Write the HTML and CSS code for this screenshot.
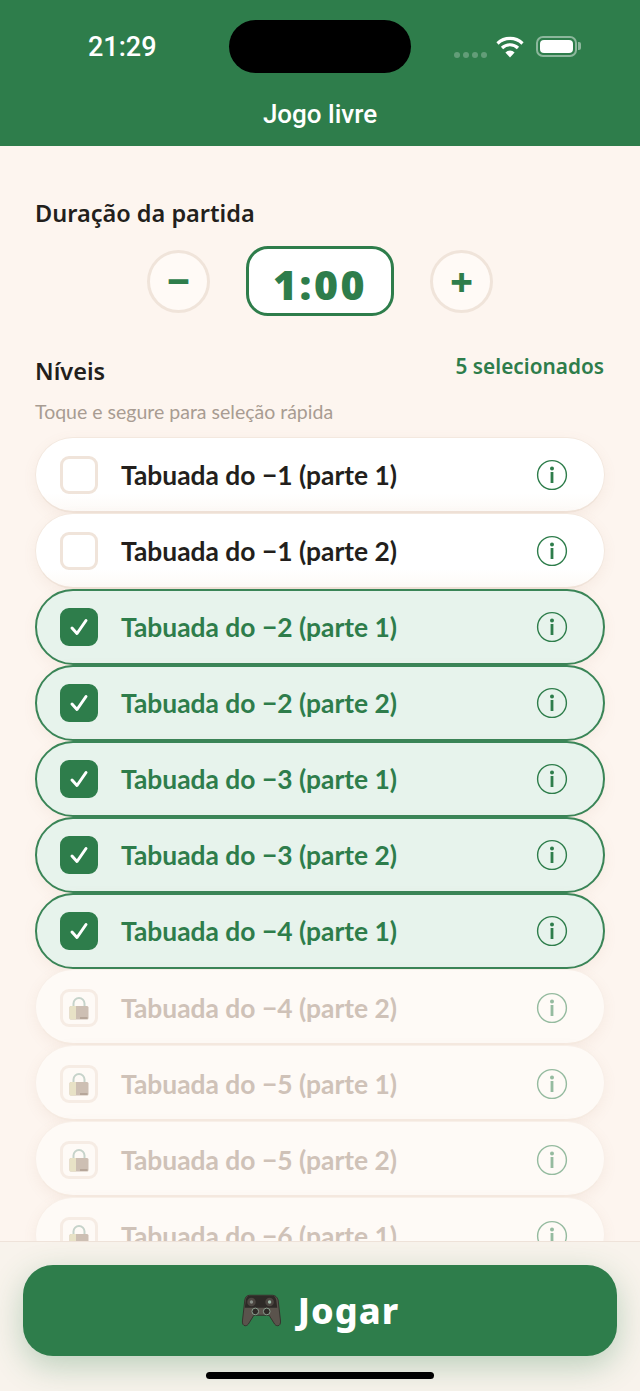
FILE: index.html
```html
<!DOCTYPE html>
<html lang="pt-BR">
<head>
  <meta charset="UTF-8">
  <title>Jogo livre</title>
  <link rel="stylesheet" href="styles.css">
</head>
<body>
  <svg class="sprites" width="0" height="0">
    <symbol id="info" viewBox="0 0 32 32">
      <circle cx="16" cy="16" r="14.4" fill="none" stroke="currentColor" stroke-width="1.4"/>
      <circle cx="16" cy="9.6" r="2" fill="currentColor"/>
      <rect x="14.6" y="13" width="2.8" height="11" fill="currentColor"/>
    </symbol>
    <symbol id="check" viewBox="0 0 20 20">
      <path d="M3 11l5 5.5L17 3.5" fill="none" stroke="#fff" stroke-width="3" stroke-linecap="round" stroke-linejoin="round"/>
    </symbol>
    <symbol id="lock" viewBox="0 0 20 24">
      <path d="M4.500 11V7.500a5.500 5.500 0 0 1 11 0V11" fill="none" stroke="#c6d3ca" stroke-width="2"/>
      <rect x="0.500" y="10" width="19" height="13.500" rx="1.500" fill="#cdbfb3"/>
      <path d="M2 10h5v13.500H2a1.500 1.500 0 0 1-1.500-1.500V11.500A1.500 1.500 0 0 1 2 10z" fill="#e8e2c6"/>
      <rect x="11" y="21.500" width="7.500" height="1" fill="#a08e80"/>
    </symbol>
  </svg>

  <div class="phone">
    <header class="topbar">
      <div class="status">
        <span class="clock">21:29</span>
        <div class="island"></div>
        <div class="status-icons">
          <div class="signal"><i></i><i></i><i></i><i></i></div>
          <svg class="wifi" width="28" height="22" viewBox="0 0 28 22">
            <path d="M1.500 7.500a18 18 0 0 1 25 0M6 12a11.500 11.500 0 0 1 16 0" fill="none" stroke="#fff" stroke-width="3.200"/>
            <path d="M14 21.500l-4.600-5a6.500 6.500 0 0 1 9.200 0z" fill="#fff"/>
          </svg>
          <div class="battery"><div class="battery-fill"></div></div>
          <div class="battery-cap"></div>
        </div>
      </div>
      <h1 class="title">Jogo livre</h1>
    </header>

    <main class="content">
      <h2 class="heading">Duração da partida</h2>
      <div class="stepper">
        <button class="step-btn">−</button>
        <div class="time-box">1:00</div>
        <button class="step-btn">+</button>
      </div>

      <div class="levels-head">
        <h2 class="heading">Níveis</h2>
        <span class="count">5 selecionados</span>
      </div>
      <p class="hint">Toque e segure para seleção rápida</p>

      <!-- Lista de níveis -->
      <ul class="levels">
        <li class="level"><span class="box"></span><span class="name">Tabuada do −1 (parte 1)</span><svg class="info"><use href="#info"/></svg></li>
        <li class="level"><span class="box"></span><span class="name">Tabuada do −1 (parte 2)</span><svg class="info"><use href="#info"/></svg></li>
        <li class="level selected"><span class="box"><svg class="tick"><use href="#check"/></svg></span><span class="name">Tabuada do −2 (parte 1)</span><svg class="info"><use href="#info"/></svg></li>
        <li class="level selected"><span class="box"><svg class="tick"><use href="#check"/></svg></span><span class="name">Tabuada do −2 (parte 2)</span><svg class="info"><use href="#info"/></svg></li>
        <li class="level selected"><span class="box"><svg class="tick"><use href="#check"/></svg></span><span class="name">Tabuada do −3 (parte 1)</span><svg class="info"><use href="#info"/></svg></li>
        <li class="level selected"><span class="box"><svg class="tick"><use href="#check"/></svg></span><span class="name">Tabuada do −3 (parte 2)</span><svg class="info"><use href="#info"/></svg></li>
        <li class="level selected"><span class="box"><svg class="tick"><use href="#check"/></svg></span><span class="name">Tabuada do −4 (parte 1)</span><svg class="info"><use href="#info"/></svg></li>
        <li class="level locked"><span class="box"><svg class="padlock"><use href="#lock"/></svg></span><span class="name">Tabuada do −4 (parte 2)</span><svg class="info"><use href="#info"/></svg></li>
        <li class="level locked"><span class="box"><svg class="padlock"><use href="#lock"/></svg></span><span class="name">Tabuada do −5 (parte 1)</span><svg class="info"><use href="#info"/></svg></li>
        <li class="level locked"><span class="box"><svg class="padlock"><use href="#lock"/></svg></span><span class="name">Tabuada do −5 (parte 2)</span><svg class="info"><use href="#info"/></svg></li>
        <li class="level locked"><span class="box"><svg class="padlock"><use href="#lock"/></svg></span><span class="name">Tabuada do −6 (parte 1)</span><svg class="info"><use href="#info"/></svg></li>
      </ul>
    </main>

    <footer class="bottom">
      <button class="play">
        <svg class="pad" width="40" height="35" viewBox="0 0 42 36">
          <path d="M9 2h24c3 0 5 2 6 5l2.500 22c.3 3-1 5-3 5-1.500 0-3-1-4-3l-5-8H13.500l-5 8c-1 2-2.500 3-4 3-2 0-3.300-2-3-5L4 7c.5-3 2-5 5-5z" fill="#5a534c" stroke="#35302c" stroke-width="1"/>
          <path d="M5 7c.5-3 2-4.500 4-4.500h24c2 0 3.500 1.500 4 4.500l1 8H4z" fill="#2e2a27"/>
          <circle cx="11" cy="9" r="4.500" fill="#4c4641"/>
          <circle cx="30" cy="9" r="4.500" fill="#4c4641"/>
          <circle cx="30" cy="9" r="1.800" fill="#9fb8a8"/>
          <circle cx="11" cy="9" r="1.800" fill="#8a8f88"/>
          <circle cx="15" cy="19" r="3.500" fill="#2e2a27" stroke="#8ea392" stroke-width="1"/>
          <circle cx="27" cy="19" r="3.500" fill="#2e2a27" stroke="#8ea392" stroke-width="1"/>
        </svg>
        <span>Jogar</span>
      </button>
      <div class="home-bar"></div>
    </footer>
  </div>
</body>
</html>
```

FILE: styles.css
```css
/* Reset minimal */
* { box-sizing: border-box; margin: 0; padding: 0; }

body {
  font-family: Lato, 'Noto Sans', sans-serif;
  background: #fdf5ef;
  color: #231f1c;
}

.sprites {
  display: block;
  height: 0;
}

.phone {
  position: relative;
  width: 640px;
  height: 1391px;
  display: flex;
  flex-direction: column;
  overflow: hidden;
}

/* Barre du haut */
.topbar {
  flex: none;
  height: 146px;
  background: #2e7d4b;
  color: #fff;
}
.status {
  position: relative;
  height: 96px;
  padding: 29px 59px 0 88px;
  display: flex;
  justify-content: space-between;
  align-items: flex-start;
}
.clock {
  font-family: Roboto, sans-serif;
  font-size: 27px;
  font-weight: 500;
  line-height: 36px;
}
.island {
  position: absolute;
  left: 229px;
  top: 20px;
  width: 182px;
  height: 53px;
  background: #000;
  border-radius: 27px;
}
.status-icons {
  display: flex;
  align-items: flex-start;
  padding-top: 7px;
}
.signal {
  display: flex;
  gap: 3px;
  margin: 16px 9px 0 0;
}
.signal i {
  width: 6px;
  height: 6px;
  border-radius: 50%;
  background: rgba(255,255,255,0.25);
}
.wifi {
  margin-right: 12px;
}
.battery {
  width: 41px;
  height: 21px;
  border: 2px solid rgba(255,255,255,0.45);
  border-radius: 7px;
  padding: 2px;
}
.battery-fill {
  height: 100%;
  background: #fff;
  border-radius: 4px;
}
.battery-cap {
  width: 3px;
  height: 8px;
  margin: 6px 0 0 1px;
  background: rgba(255,255,255,0.45);
  border-radius: 0 2px 2px 0;
}
.title {
  font-family: Roboto, sans-serif;
  font-size: 26px;
  font-weight: 500;
  line-height: 36px;
  text-align: center;
}

/* Contenu */
.content {
  flex: 1;
  min-height: 0;
  overflow: hidden;
  padding: 51px 35px 0;
}
.heading {
  font-family: 'Noto Sans', sans-serif;
  font-size: 23.5px;
  font-weight: 600;
  line-height: 32px;
}
.stepper {
  display: flex;
  justify-content: center;
  align-items: center;
  gap: 36px;
  margin-top: 17px;
}
.step-btn {
  width: 63px;
  height: 63px;
  border: 3px solid #f0e4da;
  border-radius: 50%;
  background: #fffaf6;
  color: #2e7d4b;
  font-family: 'Noto Sans', sans-serif;
  font-size: 40px;
  font-weight: 800;
  line-height: 1;
}
.time-box {
  width: 148px;
  height: 70px;
  border: 3px solid #2e7d4b;
  border-radius: 22px;
  background: #fff;
  color: #2e7d4b;
  font-family: 'Noto Sans', sans-serif;
  font-size: 41px;
  font-weight: 900;
  letter-spacing: 2.5px;
  line-height: 70px;
  text-align: center;
}
.levels-head {
  display: flex;
  justify-content: space-between;
  align-items: flex-start;
  margin-top: 24px;
}
.levels-head .heading {
  margin-top: 15px;
}
.count {
  margin: 10px 1px 0 0;
  color: #2e7d4b;
  font-family: 'Noto Sans', sans-serif;
  font-size: 20.8px;
  font-weight: 600;
  line-height: 32px;
}
.hint {
  margin-top: 12px;
  color: #a89c92;
  font-size: 19.5px;
  line-height: 26px;
}

/* Liste des niveaux */
.levels {
  list-style: none;
  margin-top: 12px;
}
.level {
  display: flex;
  align-items: center;
  height: 76px;
  padding: 1px 36px 0 24px;
  background: linear-gradient(#fff 75%, #fdfaf7);
  border: 1px solid #f3e8df;
  border-bottom: 2px solid #f0e3d9;
  border-radius: 38px;
  box-shadow: 0 4px 14px rgba(160,120,90,0.08);
}
.box {
  flex: none;
  width: 38px;
  height: 38px;
  display: flex;
  justify-content: center;
  align-items: center;
  border: 3px solid #f0e4da;
  border-radius: 9px;
  background: #fff;
}
.name {
  flex: 1;
  margin-left: 23px;
  font-size: 26.4px;
  font-weight: 700;
}
.info {
  flex: none;
  width: 32px;
  height: 32px;
  color: #2e7d4b;
}

.level.selected {
  background: #e7f3ec;
  border: 2px solid #3a8557;
  padding: 0 35px 0 23px;
}
.level.selected .box {
  background: #2e7d4b;
  border-color: #2e7d4b;
}
.level.selected .name {
  color: #2e7d4b;
}
.tick {
  width: 20px;
  height: 20px;
}

.level.locked {
  padding-top: 2px;
  background: #fefaf6;
  border-color: #f8efe8;
  border-bottom-color: #f6ebe2;
}
.level.locked .box {
  background: #fefaf6;
  border-color: #f6ece4;
}
.level.locked .name {
  color: #cfc2b8;
}
.level.locked .info {
  opacity: 0.5;
}
.padlock {
  width: 20px;
  height: 24px;
}

/* Bas de page */
.bottom {
  position: absolute;
  left: 0;
  right: 0;
  bottom: 0;
  height: 150px;
  padding: 23px 23px 0;
  background: #f8f3ec;
  border-top: 1px solid #efe3da;
}
.play {
  width: 594px;
  height: 91px;
  display: flex;
  justify-content: center;
  align-items: center;
  gap: 17px;
  border: none;
  border-radius: 30px;
  background: #2e7d4b;
  color: #fff;
  font-family: 'Noto Sans', sans-serif;
  font-size: 36px;
  font-weight: 800;
  letter-spacing: 1px;
  box-shadow: 0 10px 32px rgba(46,125,75,0.3);
}
.home-bar {
  width: 228px;
  height: 7px;
  margin: 16px auto 0;
  background: #000;
  border-radius: 4px;
}
```
